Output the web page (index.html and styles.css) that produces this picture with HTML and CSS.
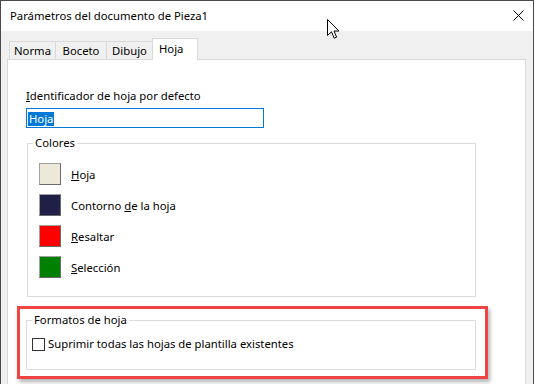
FILE: index.html
```html
<!DOCTYPE html>
<html lang="es">
<head>
  <meta charset="UTF-8">
  <title>Parámetros del documento de Pieza1</title>
  <link rel="stylesheet" href="styles.css">
</head>
<body>
  <div class="window">
    <div class="titlebar">
      <span class="title">Parámetros del documento de Pieza1</span>
      <svg class="close" width="11" height="11" viewBox="0 0 11 11">
        <path d="M0.5 0.5 L10.5 10.5 M10.5 0.5 L0.5 10.5" stroke="#000" stroke-width="1" fill="none"/>
      </svg>
    </div>

    <div class="client">
      <div class="tabs">
        <div class="tab tab-norma">Norma</div>
        <div class="tab tab-boceto">Boceto</div>
        <div class="tab tab-dibujo">Dibujo</div>
        <div class="tab tab-hoja active">Hoja</div>
      </div>

      <div class="panel">
        <div class="field-label"><u>I</u>dentificador de hoja por defecto</div>
        <div class="textbox"><span class="sel">Hoja</span></div>

        <fieldset class="group colors">
          <legend>Colores</legend>
          <div class="group-body color-list">
            <div class="color-row"><span class="swatch sheet"></span><span><u>H</u>oja</span></div>
            <div class="color-row"><span class="swatch outline"></span><span>Contorno <u>d</u>e la hoja</span></div>
            <div class="color-row"><span class="swatch highlight-color"></span><span><u>R</u>esaltar</span></div>
            <div class="color-row"><span class="swatch selection"></span><span><u>S</u>elección</span></div>
          </div>
        </fieldset>

        <div class="highlight">
          <fieldset class="group formats">
            <legend>Formatos de hoja</legend>
            <div class="group-body">
              <label class="check"><span class="box"></span>Suprimir todas las hojas de plantilla existentes</label>
            </div>
          </fieldset>
        </div>
      </div>
    </div>

    <svg class="cursor" width="14" height="21" viewBox="0 0 14 21">
      <path d="M0.5 0.5 L0.5 16.5 L4.5 12.8 L7.2 19.2 L9.6 18.2 L7 12 L12 12 Z" fill="#fff" stroke="#000" stroke-width="1" stroke-linejoin="miter"/>
    </svg>
  </div>
</body>
</html>
```

FILE: styles.css
```css
html, body {
  margin: 0;
  background: #fff;
}

body {
  font-family: 'Noto Sans', 'Liberation Sans', sans-serif;
  font-size: 11.3px;
  color: #000;
  overflow: hidden;
}

.window {
  position: relative;
  width: 534px;
  height: 384px;
  box-sizing: border-box;
  border: 1px solid #4a4a4a;
  border-bottom: none;
  display: flex;
  flex-direction: column;
  background: #f0f0f0;
}

.titlebar {
  height: 30px;
  background: #fff;
  display: flex;
  align-items: center;
  justify-content: space-between;
  padding: 0 9px 1px 9px;
  box-sizing: border-box;
  flex-shrink: 0;
}

.title {
  line-height: 16px;
}

.close {
  display: block;
}

.client {
  flex: 1;
  display: flex;
  flex-direction: column;
  padding: 7px 7px 0 6px;
  min-height: 0;
}

/* tabs */
.tabs {
  display: flex;
  align-items: flex-end;
  padding-left: 2px;
}

.tab {
  height: 18px;
  box-sizing: border-box;
  border: 1px solid #d9d9d9;
  border-bottom: none;
  background: #f0f0f0;
  display: flex;
  align-items: center;
  justify-content: center;
  line-height: 16px;
  padding-top: 1px;
}

.tab + .tab {
  margin-left: -1px;
}

.tab-norma { width: 47px; }
.tab-boceto { width: 52px; }
.tab-dibujo { width: 47px; }

.tab.active {
  width: 46px;
  height: 22px;
  margin-bottom: -1px;
  background: #fff;
  position: relative;
  z-index: 1;
  justify-content: flex-start;
  padding: 0 0 2px 6px;
}

.panel {
  flex: 1;
  background: #fff;
  border: 1px solid #d9d9d9;
  border-bottom: none;
  padding: 28px 0 0 18px;
}

.field-label {
  line-height: 16px;
}

.textbox {
  margin-top: 4px;
  width: 238px;
  height: 20px;
  box-sizing: border-box;
  border: 1px solid #0078d7;
  padding: 2px 0 0 1px;
}

.sel {
  display: inline-block;
  background: #0078d7;
  color: #fff;
  line-height: 14px;
  padding: 0 1px;
}

/* group boxes */
.group {
  margin: 0;
  padding: 0;
  border: 1px solid #dcdcdc;
  min-width: 0;
  box-sizing: border-box;
}

.group legend {
  margin-left: 5px;
  padding: 0 2px;
  line-height: 16px;
}

.colors {
  margin: 7px 0 0 1px;
  width: 449px;
}

.color-list {
  display: flex;
  flex-direction: column;
  gap: 9px;
  padding: 12px 0 18px 11px;
}

.color-row {
  display: flex;
  align-items: center;
  gap: 10px;
  height: 22px;
}

.swatch {
  width: 22px;
  height: 22px;
  box-sizing: border-box;
  border: 1px solid #a0a0a0;
  border-right-color: #6a6a6a;
  border-bottom-color: #6a6a6a;
}

.swatch.sheet { background: #ece9d8; }
.swatch.outline { background: #1f1f47; }
.swatch.highlight-color { background: #ff0000; }
.swatch.selection { background: #008000; }

/* red annotation box */
.highlight {
  margin: 9px 0 0 -9px;
  width: 471px;
  box-sizing: border-box;
  border: 3px solid #f04444;
  padding: 3px 9px 6px 6px;
  box-shadow: 2px 3px 4px rgba(0, 0, 0, 0.3);
}

.formats {
  width: 450px;
}

.formats .group-body {
  padding: 8px 0 17px 5px;
}

.check {
  display: flex;
  align-items: center;
  gap: 3px;
  line-height: 16px;
}

.box {
  width: 13px;
  height: 13px;
  box-sizing: border-box;
  border: 1px solid #333;
  background: #fff;
}

.cursor {
  position: absolute;
  left: 326px;
  top: 18px;
}
```
